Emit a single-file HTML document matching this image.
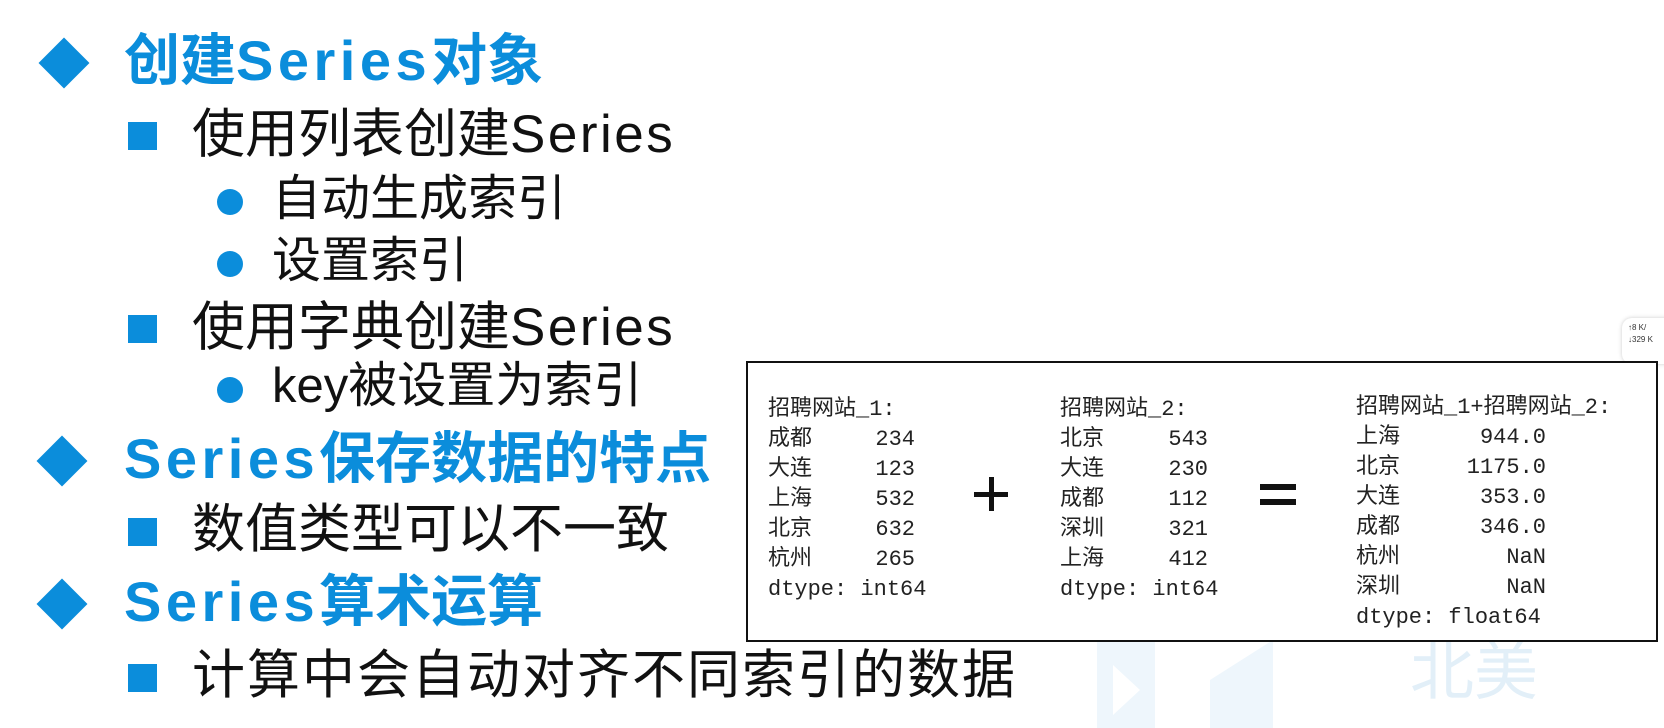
<!DOCTYPE html>
<html><head><meta charset="utf-8"><style>
body{margin:0;width:1664px;height:728px;background:#fff;position:relative;overflow:hidden;font-family:"Liberation Sans","Noto Sans CJK SC",sans-serif;}
.a{position:absolute;white-space:nowrap;line-height:1;}
.t1{font-size:56px;font-weight:bold;color:#0b8ddb;}
.t1 span{letter-spacing:4.5px;}
.t2{font-size:53px;color:#111;}
.t2 span{letter-spacing:2.5px;}
.t3{font-size:49px;color:#111;}
.dia{position:absolute;width:36px;height:36px;background:#0b8ddb;transform:rotate(45deg);}
.sq{position:absolute;width:29px;height:28px;background:#0b8ddb;}
.dot{position:absolute;width:26px;height:26px;border-radius:50%;background:#0b8ddb;}
.m{position:absolute;white-space:pre;font-family:"Liberation Mono","Noto Sans CJK SC",monospace;font-size:22px;line-height:30px;color:#222;}
.r{text-align:right;}
</style></head><body>
<svg class="a" style="left:1095px;top:640px;" width="180" height="88"><path d="M2 0 L60 0 L60 88 L2 88 Z M18 25 L45 50 L18 75 Z" fill="#eef6fc" fill-rule="evenodd"/><path d="M115 40 L178 0 L178 88 L115 88 Z" fill="#eef6fc"/></svg>
<div class="a" style="left:1410px;top:640px;font-size:64px;color:#e2eff8;">北美</div>

<div class="dia" style="left:46px;top:45px;"></div>
<div class="a t1" style="left:124px;top:33px;">创建<span>Series</span>对象</div>
<div class="sq" style="left:128px;top:122px;"></div>
<div class="a t2" style="left:192px;top:108px;">使用列表创建<span>Series</span></div>
<div class="dot" style="left:217px;top:189px;"></div>
<div class="a t3" style="left:272px;top:175px;">自动生成索引</div>
<div class="dot" style="left:217px;top:251px;"></div>
<div class="a t3" style="left:272px;top:237px;">设置索引</div>
<div class="sq" style="left:128px;top:315px;"></div>
<div class="a t2" style="left:192px;top:301px;">使用字典创建<span>Series</span></div>
<div class="dot" style="left:217px;top:377px;"></div>
<div class="a t3" style="left:272px;top:362px;">key被设置为索引</div>
<div class="dia" style="left:44px;top:443px;"></div>
<div class="a t1" style="left:124px;top:431px;"><span>Series</span>保存数据的特点</div>
<div class="sq" style="left:128px;top:518px;"></div>
<div class="a t2" style="left:192px;top:503px;">数值类型可以不一致</div>
<div class="dia" style="left:44px;top:586px;"></div>
<div class="a t1" style="left:124px;top:574px;"><span>Series</span>算术运算</div>
<div class="sq" style="left:128px;top:664px;"></div>
<div class="a t2" style="left:192px;top:649px;letter-spacing:2px;">计算中会自动对齐不同索引的数据</div>

<div class="a" style="left:1622px;top:318px;width:60px;height:38px;background:#fff;border-radius:10px;box-shadow:0 0 4px #ccc;font-size:8px;color:#333;line-height:12px;padding:4px 6px;">↑8 K/<br>↓329 K</div>

<div class="a" style="left:746px;top:361px;width:908px;height:277px;border:2px solid #111;background:#fff;"></div>
<div class="m" style="left:768px;top:395px;">招聘网站_1:
成都
大连
上海
北京
杭州
dtype: int64</div>
<div class="m r" style="left:860px;top:425px;width:55px;">234
123
532
632
265</div>
<div class="m" style="left:1060px;top:395px;">招聘网站_2:
北京
大连
成都
深圳
上海
dtype: int64</div>
<div class="m r" style="left:1150px;top:425px;width:58px;">543
230
112
321
412</div>
<div class="m" style="left:1356px;top:393px;">招聘网站_1+招聘网站_2:
上海
北京
大连
成都
杭州
深圳
dtype: float64</div>
<div class="m r" style="left:1440px;top:423px;width:106px;">944.0
1175.0
353.0
346.0
NaN
NaN</div>
<div class="a" style="left:974px;top:492px;width:34px;height:5px;background:#111;"></div>
<div class="a" style="left:989px;top:477px;width:5px;height:34px;background:#111;"></div>
<div class="a" style="left:1260px;top:484px;width:36px;height:6px;background:#111;"></div>
<div class="a" style="left:1260px;top:499px;width:36px;height:6px;background:#111;"></div>
</body></html>
